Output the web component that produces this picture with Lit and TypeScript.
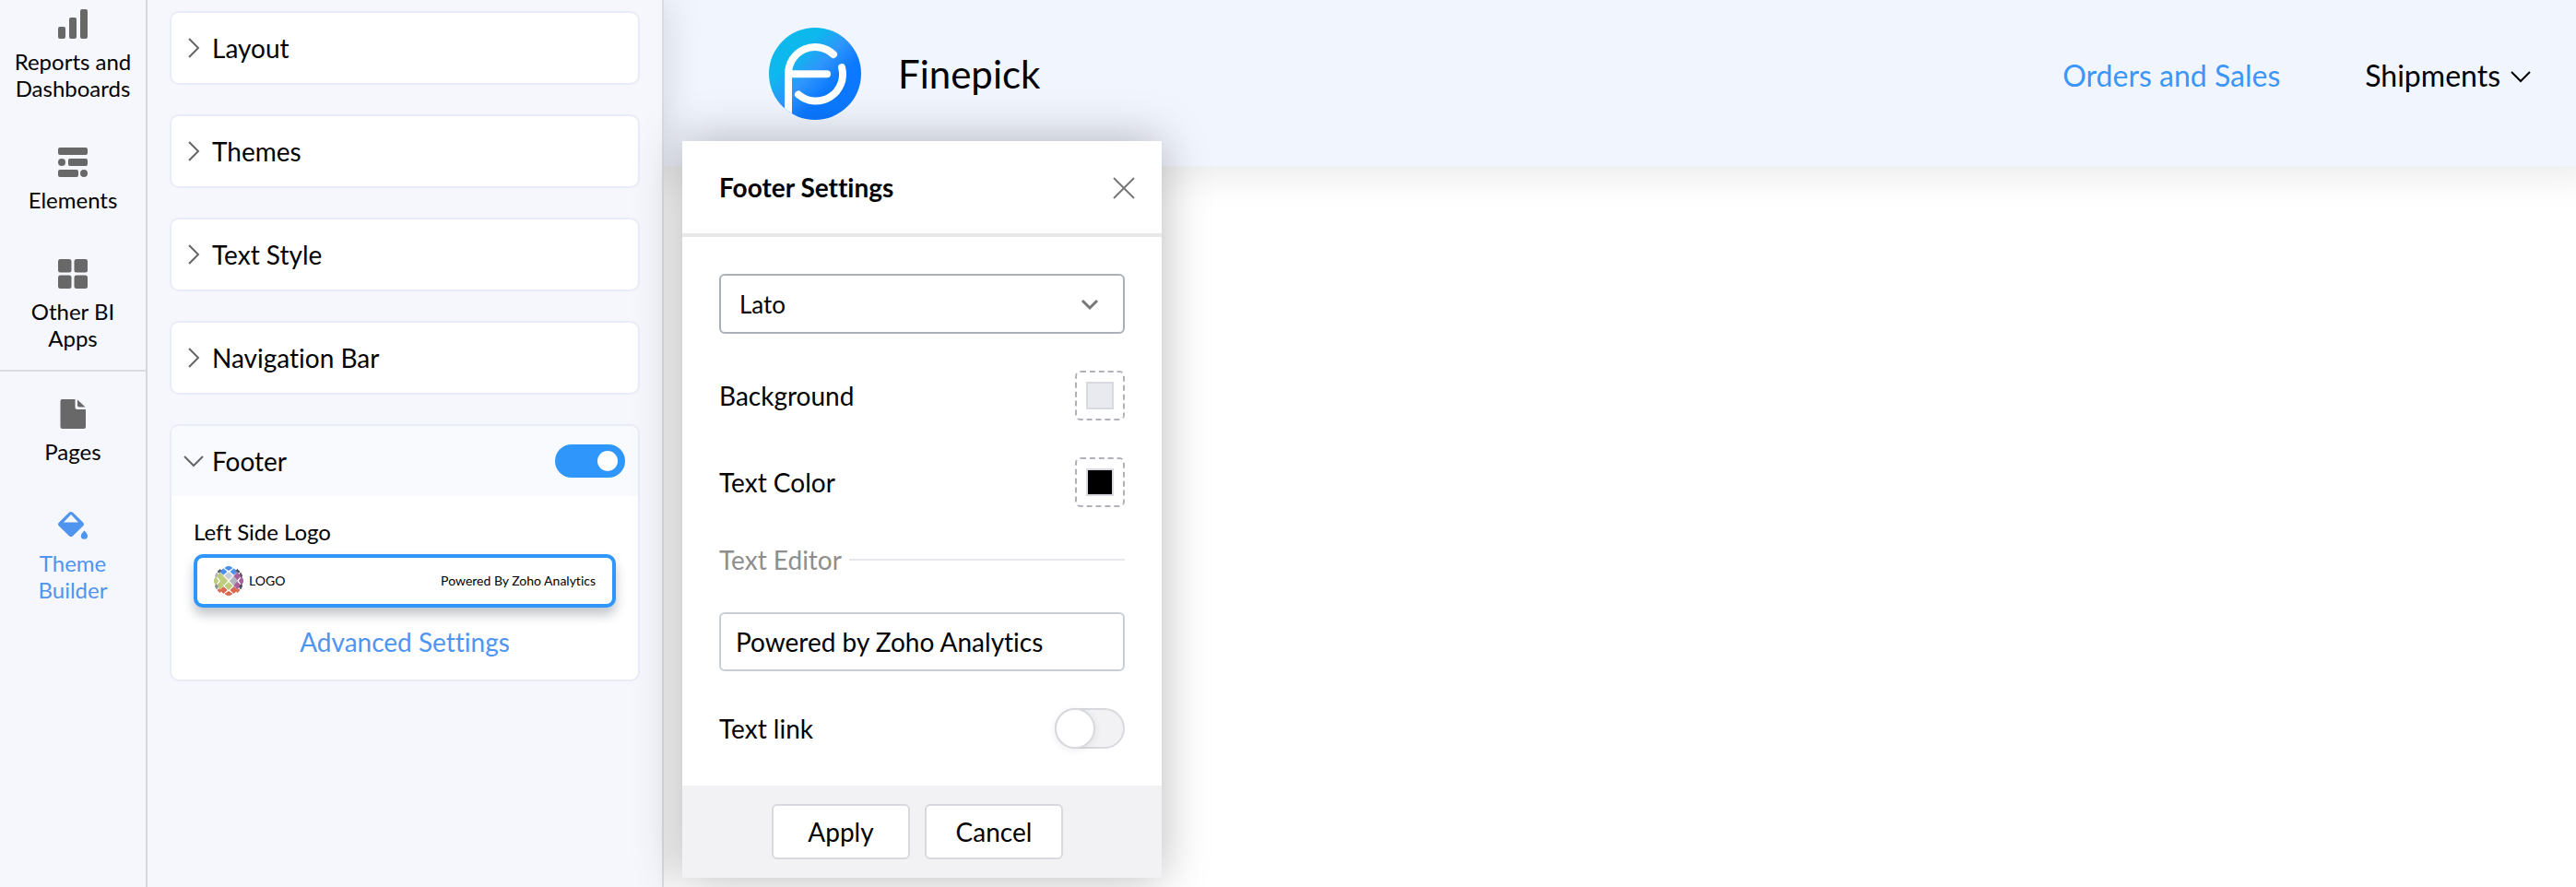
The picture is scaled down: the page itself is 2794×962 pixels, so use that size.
import { LitElement, html, css, svg, nothing } from "lit";
import { customElement, state } from "lit/decorators.js";
import { classMap } from "lit/directives/class-map.js";

const base = css`
  :host {
    font-family: Lato, "Open Sans", sans-serif;
    font-variant-ligatures: none;
    color: #000;
  }
  *,
  *::before {
    box-sizing: border-box;
  }
  button,
  input,
  select {
    margin: 0;
    font: inherit;
    font-variant-ligatures: none;
    color: inherit;
  }
  button {
    padding: 0;
    border: 0;
    background: none;
    cursor: pointer;
  }
  a {
    color: inherit;
    text-decoration: none;
  }
  svg {
    display: block;
    flex: none;
  }
`;

const barsIcon = svg`
  <rect x="0" y="19" width="8" height="13" rx="2"/>
  <rect x="12" y="9" width="8" height="23" rx="2"/>
  <rect x="24" y="0" width="8" height="32" rx="2"/>`;

const elementsIcon = svg`
  <rect x="0" y="0" width="32" height="8" rx="2"/>
  <circle cx="4" cy="16" r="4"/>
  <rect x="11" y="12" width="21" height="8" rx="2"/>
  <rect x="0" y="24" width="22" height="8" rx="2"/>
  <circle cx="28" cy="28" r="4"/>`;

const gridIcon = svg`
  <rect x="0" y="0" width="14.5" height="14.5" rx="2.5"/>
  <rect x="17.5" y="0" width="14.5" height="14.5" rx="2.5"/>
  <rect x="0" y="17.5" width="14.5" height="14.5" rx="2.5"/>
  <rect x="17.5" y="17.5" width="14.5" height="14.5" rx="2.5"/>`;

const pageIcon = svg`
  <path d="M4.500 0H18.500V8.500A2.500 2.500 0 0 0 21 11H30V30A2 2 0 0 1 28 32H4.500A2 2 0 0 1 2.500 30V2A2 2 0 0 1 4.500 0Z"/>
  <path d="M21 0.500L29.500 8.500H23A2 2 0 0 1 21 6.500Z"/>`;

const bucketIcon = svg`
  <path fill-rule="evenodd" d="M12 1.800Q14 0 16 1.800L27 12.500Q29 14.500 27 16.500L16 27.200Q14 29 12 27.200L1 16.500Q-1 14.500 1 12.500ZM14 4L6 12.500H22Z"/>
  <path d="M28.500 21.500C30.500 23.800 32 25.300 32 27.200A3.600 3.600 0 0 1 24.800 27.200C24.800 25.300 26.500 23.800 28.500 21.500Z"/>`;

interface RailItem {
  label: string;
  icon: unknown;
  active?: boolean;
}

const railGroups: RailItem[][] = [
  [
    { label: "Reports and Dashboards", icon: barsIcon },
    { label: "Elements", icon: elementsIcon },
    { label: "Other BI Apps", icon: gridIcon },
  ],
  [
    { label: "Pages", icon: pageIcon },
    { label: "Theme Builder", icon: bucketIcon, active: true },
  ],
];

@customElement("side-rail")
export class SideRail extends LitElement {
  static styles = [
    base,
    css`
      :host {
        display: block;
        box-sizing: border-box;
        width: 160px;
        flex: none;
        background: #f6f7fc;
        border-right: 2px solid #d5d7dc;
      }
      .group {
        display: flex;
        flex-direction: column;
        gap: 50px;
        padding: 10px 0 20px;
      }
      .group + .group {
        border-top: 2px solid #d9dbe0;
        padding-top: 30px;
      }
      .item {
        display: flex;
        flex-direction: column;
        align-items: center;
        gap: 10px;
        padding: 0 14px;
        font-size: 24px;
        line-height: 29px;
        text-align: center;
      }
      .icon {
        fill: #686868;
      }
      .active {
        color: #4f94ef;
      }
      .active .icon {
        fill: #4f94ef;
      }
    `,
  ];

  render() {
    return html`<nav aria-label="Builder">
      ${railGroups.map(
        (group) => html`<div class="group">
          ${group.map(
            (item) => html`<a class=${classMap({ item: true, active: !!item.active })} href="#">
              <svg class="icon" width="32" height="32" viewBox="0 0 32 32" aria-hidden="true">${item.icon}</svg>
              <span>${item.label}</span>
            </a>`
          )}
        </div>`
      )}
    </nav>`;
  }
}

/* Tiles of the sample globe logo: centre x, centre y, half width, half height, colour. */
const tiles: [number, number, number, number, string][] = [
  [16, 2, 4.400, 3, "#4c90ee"],
  [10.400, 6, 4, 3.600, "#4c90ee"],
  [21.600, 6, 4, 3.600, "#4c90ee"],
  [5.400, 4.800, 3, 3, "#5b6168"],
  [26.600, 4.800, 3, 3, "#4f4a55"],
  [2.600, 9.500, 2.300, 3.400, "#b2b6bd"],
  [29.400, 9.500, 2.300, 3.400, "#5b4f5c"],
  [6.800, 11, 4, 4.400, "#bccb7c"],
  [16, 10.500, 4.600, 4.400, "#c9ced6"],
  [25.200, 11, 4, 4.400, "#a9609a"],
  [2, 16, 3.200, 4.400, "#bccb7c"],
  [10.600, 16, 4.600, 4.800, "#bccb7c"],
  [21.400, 16, 4.600, 4.800, "#b2b6bd"],
  [30, 16, 3.200, 4.400, "#a9609a"],
  [6.800, 21, 4, 4.400, "#bccb7c"],
  [16, 21.500, 4.600, 4.400, "#bccb7c"],
  [25.200, 21, 4, 4.400, "#a9609a"],
  [2.600, 22.500, 2.300, 3.400, "#8b8f95"],
  [29.400, 22.500, 2.300, 3.400, "#4f4a55"],
  [10.400, 26, 4.200, 3.800, "#dd6a50"],
  [21.600, 26, 4.200, 3.800, "#dd6a50"],
  [5.400, 27.200, 3, 3, "#dd6a50"],
  [26.600, 27.200, 3, 3, "#dd6a50"],
  [16, 30, 4.400, 3, "#dd6a50"],
];

const sections = ["Layout", "Themes", "Text Style", "Navigation Bar"];

@customElement("theme-panel")
export class ThemePanel extends LitElement {
  @state() private footerOn = true;

  static styles = [
    base,
    css`
      :host {
        display: flex;
        flex-direction: column;
        gap: 32px;
        box-sizing: border-box;
        width: 560px;
        flex: none;
        padding: 12px 24px;
        background: #f6f7fc;
        border-right: 2px solid #d9dbe0;
        font-size: 28px;
        line-height: 34px;
      }
      .card {
        border: 2px solid #e8ecf9;
        border-radius: 10px;
        background: #fff;
        overflow: hidden;
      }
      .head {
        display: flex;
        align-items: center;
        height: 76px;
        padding-right: 14px;
      }
      .open {
        background: #f9fafd;
      }
      .toggle-card {
        flex: 1;
        display: flex;
        align-items: center;
        gap: 8px;
        height: 100%;
        padding-left: 12px;
        text-align: left;
      }
      .chevron {
        fill: none;
        stroke: #666;
        stroke-width: 2;
      }
      .switch {
        appearance: none;
        display: flex;
        align-items: center;
        width: 76px;
        height: 36px;
        padding: 0 8px;
        border-radius: 18px;
        background: #c8ccd3;
        cursor: pointer;
      }
      .switch::before {
        content: "";
        width: 22px;
        height: 22px;
        border-radius: 50%;
        background: #fff;
      }
      .switch:checked {
        justify-content: flex-end;
        background: #2f96fc;
      }
      .body {
        display: flex;
        flex-direction: column;
        padding: 24px;
      }
      .label {
        margin: 0 0 10px;
        font-size: 24px;
        line-height: 29px;
        font-weight: 400;
      }
      .preview {
        display: flex;
        align-items: center;
        gap: 6px;
        height: 58px;
        padding: 0 18px;
        border: 4px solid #2f96fc;
        border-radius: 10px;
        background: #fff;
        box-shadow: 0 8px 12px rgba(40, 50, 70, 0.28);
        font-size: 14px;
        line-height: 18px;
      }
      .powered {
        margin-left: auto;
      }
      .advanced {
        align-self: center;
        margin-top: 20px;
        color: #4f94ef;
      }
    `,
  ];

  private chevron(open: boolean) {
    return html`<svg class="chevron" width="24" height="24" viewBox="0 0 24 24" aria-hidden="true">
      <path d=${open ? "M2 7L12 17L22 7" : "M7 2L17 12L7 22"} />
    </svg>`;
  }

  render() {
    return html`
      ${sections.map(
        (name) => html`<section class="card">
          <div class="head">
            <button class="toggle-card" aria-expanded="false">${this.chevron(false)}${name}</button>
          </div>
        </section>`
      )}
      <section class="card">
        <div class="head open">
          <button class="toggle-card" aria-expanded="true">${this.chevron(true)}Footer</button>
          <input
            class="switch"
            type="checkbox"
            role="switch"
            aria-label="Footer"
            .checked=${this.footerOn}
            @change=${(e: Event) => (this.footerOn = (e.target as HTMLInputElement).checked)}
          />
        </div>
        <div class="body">
          <h3 class="label">Left Side Logo</h3>
          <button class="preview">
            <svg width="32" height="32" viewBox="0 0 32 32" aria-hidden="true">
              <clipPath id="globe"><circle cx="16" cy="16" r="16" /></clipPath>
              <g clip-path="url(#globe)">
                ${tiles.map(
                  ([x, y, w, h, fill]) =>
                    svg`<path fill=${fill} stroke=${fill} stroke-width="1" stroke-linejoin="round"
                      d="M${x - w + 0.5} ${y}L${x} ${y - h + 0.5}L${x + w - 0.5} ${y}L${x} ${y + h - 0.5}Z"/>`
                )}
              </g>
            </svg>
            <span>LOGO</span>
            <span class="powered">Powered By Zoho Analytics</span>
          </button>
          <a class="advanced" href="#">Advanced Settings</a>
        </div>
      </section>
    `;
  }
}

@customElement("site-header")
export class SiteHeader extends LitElement {
  static styles = [
    base,
    css`
      :host {
        display: flex;
        align-items: center;
        gap: 40px;
        padding: 30px 48px 50px 114px;
        background: #f1f5fe;
        box-shadow: 0 -10px 40px 20px rgba(0, 0, 0, 0.09);
      }
      .name {
        font-size: 42px;
        line-height: 48px;
      }
      .nav {
        display: flex;
        gap: 92px;
        margin-left: auto;
        padding-top: 4px;
        font-size: 32px;
        line-height: 38px;
      }
      .current {
        color: #3c96f8;
      }
      .menu {
        display: flex;
        align-items: center;
        gap: 10px;
      }
      .arrow {
        fill: none;
        stroke: #000;
        stroke-width: 2;
      }
    `,
  ];

  render() {
    return html`
      <svg width="100" height="100" viewBox="0 0 100 100" aria-hidden="true">
        <defs>
          <linearGradient id="disc" x1="0" y1="0" x2="1" y2="1">
            <stop offset="0.3" stop-color="#0cb8ec" />
            <stop offset="0.48" stop-color="#2f96fc" />
            <stop offset="0.66" stop-color="#0b78fe" />
          </linearGradient>
          <clipPath id="round"><circle cx="50" cy="50" r="50" /></clipPath>
        </defs>
        <g clip-path="url(#round)">
          <rect width="100" height="100" fill="url(#disc)" />
          <g fill="none" stroke="#fff" stroke-width="8" stroke-linecap="round">
            <path d="M21 104V50A29 29 0 0 1 70 29" />
            <path d="M21 50.300H63" />
            <path d="M79 43A29 29 0 0 1 32 72.500" />
          </g>
        </g>
      </svg>
      <span class="name">Finepick</span>
      <nav class="nav" aria-label="Site">
        <a class="current" href="#">Orders and Sales</a>
        <button class="menu">
          Shipments
          <svg class="arrow" width="24" height="24" viewBox="0 0 24 24" aria-hidden="true">
            <path d="M2 8L12 18L22 8" />
          </svg>
        </button>
      </nav>
    `;
  }
}

@customElement("footer-settings")
export class FooterSettings extends LitElement {
  static styles = [
    base,
    css`
      :host {
        display: block;
        width: 520px;
        background: #fff;
        box-shadow: 0 0 48px rgba(0, 0, 0, 0.28);
        font-size: 28px;
        line-height: 34px;
      }
      .head {
        display: flex;
        align-items: center;
        justify-content: space-between;
        height: 104px;
        padding: 0 28px 0 40px;
        border-bottom: 4px solid #e7e8e8;
      }
      .title {
        margin: 0;
        font-size: 28px;
        font-weight: 700;
      }
      .cross {
        fill: none;
        stroke: #777;
        stroke-width: 2;
      }
      .body {
        display: flex;
        flex-direction: column;
        gap: 40px;
        padding: 40px;
      }
      .select-wrap {
        display: grid;
        align-items: center;
      }
      .font,
      .drop {
        grid-area: 1 / 1;
      }
      .font {
        appearance: none;
        width: 100%;
        height: 65px;
        padding: 0 20px;
        border: 2px solid #aab0b7;
        border-radius: 6px;
        background: #fff;
        font-size: 26px;
      }
      .drop {
        justify-self: end;
        margin-right: 26px;
        fill: none;
        stroke: #777;
        stroke-width: 3;
        pointer-events: none;
      }
      .row {
        display: flex;
        align-items: center;
        justify-content: space-between;
      }
      .color {
        appearance: none;
        width: 54px;
        height: 54px;
        padding: 10px;
        border: 2px dashed #aeb2b8;
        border-radius: 6px;
        background: #fff;
        cursor: pointer;
      }
      .color::-webkit-color-swatch-wrapper {
        padding: 0;
      }
      .color::-webkit-color-swatch {
        border: 2px solid #d8dae0;
        border-radius: 0;
      }
      .divider {
        display: flex;
        align-items: center;
        gap: 8px;
        color: #8e8e8e;
      }
      .rule {
        flex: 1;
        height: 2px;
        background: #e6e8ec;
      }
      .text {
        width: 100%;
        height: 64px;
        padding: 0 16px;
        border: 2px solid #c9ced5;
        border-radius: 6px;
        background: #fff;
      }
      .switch {
        appearance: none;
        display: flex;
        width: 76px;
        height: 44px;
        border-radius: 22px;
        border: 2px solid #d7d9de;
        background: #f2f2f4;
        cursor: pointer;
      }
      .switch::before {
        content: "";
        width: 44px;
        height: 44px;
        margin: -2px;
        border: 2px solid #d7d9de;
        border-radius: 50%;
        background: #fff;
        box-shadow: 0 2px 8px rgba(0, 0, 0, 0.08);
      }
      .switch:checked {
        justify-content: flex-end;
        background: #2f96fc;
      }
      .foot {
        display: flex;
        justify-content: center;
        gap: 16px;
        padding: 20px 10px 20px 0;
        background: #f2f2f4;
      }
      .action {
        width: 150px;
        height: 60px;
        border: 2px solid #d7d9de;
        border-radius: 6px;
        background: #fff;
      }
    `,
  ];

  render() {
    return html`
      <header class="head">
        <h2 class="title">Footer Settings</h2>
        <button aria-label="Close">
          <svg class="cross" width="26" height="26" viewBox="0 0 26 26" aria-hidden="true">
            <path d="M2 3L24 25M24 3L2 25" />
          </svg>
        </button>
      </header>
      <div class="body">
        <div class="select-wrap">
          <select class="font" aria-label="Font">
            <option>Lato</option>
            <option>Roboto</option>
            <option>Open Sans</option>
          </select>
          <svg class="drop" width="22" height="16" viewBox="0 0 22 16" aria-hidden="true">
            <path d="M2 4L10 12L18 4" />
          </svg>
        </div>
        <div class="row">
          <label for="background">Background</label>
          <input class="color" id="background" type="color" value="#e9eaef" />
        </div>
        <div class="row">
          <label for="color">Text Color</label>
          <input class="color" id="color" type="color" value="#000000" />
        </div>
        <div class="divider"><label for="text">Text Editor</label><span class="rule"></span></div>
        <input class="text" id="text" type="text" value="Powered by Zoho Analytics" />
        <div class="row">
          <label for="link">Text link</label>
          <input class="switch" id="link" type="checkbox" role="switch" />
        </div>
      </div>
      <footer class="foot">
        <button class="action">Apply</button>
        <button class="action" @click=${() => this.dispatchEvent(new CustomEvent("cancel"))}>Cancel</button>
      </footer>
    `;
  }
}

@customElement("app-root")
export class AppRoot extends LitElement {
  @state() private settingsOpen = true;

  static styles = [
    base,
    css`
      :host {
        display: block;
      }
      .page {
        position: relative;
        display: flex;
        min-height: 100vh;
        overflow: hidden;
        background: #fff;
      }
      .panel {
        z-index: 1;
        box-shadow: 0 0 40px rgba(0, 0, 0, 0.14);
      }
      .rail {
        z-index: 2;
      }
      .site {
        flex: 1;
        min-width: 0;
      }
      .dialog {
        position: absolute;
        z-index: 3;
        left: 740px;
        top: 153px;
      }
    `,
  ];

  render() {
    return html`<div class="page">
      <side-rail class="rail"></side-rail>
      <theme-panel class="panel"></theme-panel>
      <main class="site"><site-header></site-header></main>
      ${this.settingsOpen
        ? html`<footer-settings
            class="dialog"
            role="dialog"
            aria-label="Footer Settings"
            @cancel=${() => (this.settingsOpen = false)}
          ></footer-settings>`
        : nothing}
    </div>`;
  }
}
